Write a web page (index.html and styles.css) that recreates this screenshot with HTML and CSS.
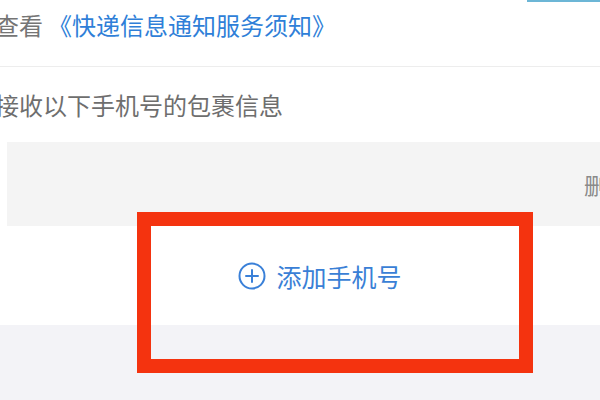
FILE: index.html
```html
<!DOCTYPE html>
<html lang="zh-CN">
<head>
  <meta charset="utf-8"/>
  <title>快递信息通知</title>
  <link rel="stylesheet" href="styles.css">
</head>
<body>
  <div class="top-edge"><span class="top-btn"></span></div>

  <div class="notice">
    查看<a class="link" href="#">《快递信息通知服务须知》</a>
  </div>

  <div class="title">接收以下手机号的包裹信息</div>

  <div class="phone-box">
    <span class="delete">删除</span>
  </div>

  <div class="add-row">
    <svg class="plus" width="28" height="28" viewBox="0 0 28 28">
      <circle cx="14" cy="14" r="12.5" fill="none" stroke="#3a80d8" stroke-width="2"/>
      <path d="M14 8v12M8 14h12" stroke="#3a80d8" stroke-width="2" stroke-linecap="round"/>
    </svg>
    <span class="add-text">添加手机号</span>
  </div>

  <div class="footer"></div>

  <div class="highlight"></div>
</body>
</html>
```

FILE: styles.css
```css
html, body {
  margin: 0;
  height: 100%;
  overflow: hidden;
}
body {
  font-family: "Noto Sans CJK SC", "Noto Sans", sans-serif;
  background: #fff;
  position: relative;
}
.top-edge {
  height: 2px;
  display: flex;
  justify-content: flex-end;
}
.top-btn {
  width: 73px;
  height: 2px;
  background: #6cb6d6;
}
.notice {
  height: 64px;
  line-height: 46px;
  font-size: 24px;
  color: #757575;
  margin-left: -5px;
  border-bottom: 1px solid #ededed;
  white-space: nowrap;
}
.link {
  color: #2f7fd8;
  text-decoration: none;
  margin-left: 5px;
}
.title {
  height: 75px;
  line-height: 76px;
  font-size: 24px;
  color: #6e6e6e;
  margin-left: -5px;
  white-space: nowrap;
}
.phone-box {
  margin-left: 7px;
  height: 84px;
  background: #f4f4f4;
  display: flex;
  align-items: center;
  justify-content: flex-end;
  overflow: hidden;
}
.delete {
  font-size: 22px;
  color: #8a8a8a;
  margin-right: -28px;
  white-space: nowrap;
}
.add-row {
  height: 99px;
  display: flex;
  align-items: center;
  justify-content: center;
  gap: 10px;
  padding-left: 40px;
}
.add-text {
  font-size: 25px;
  color: #3a7fd6;
}
.footer {
  height: 75px;
  background: #f3f3f7;
}
.highlight {
  position: absolute;
  left: 137px;
  top: 212px;
  width: 396px;
  height: 161px;
  box-sizing: border-box;
  border: 14px solid #f4330f;
}
```
